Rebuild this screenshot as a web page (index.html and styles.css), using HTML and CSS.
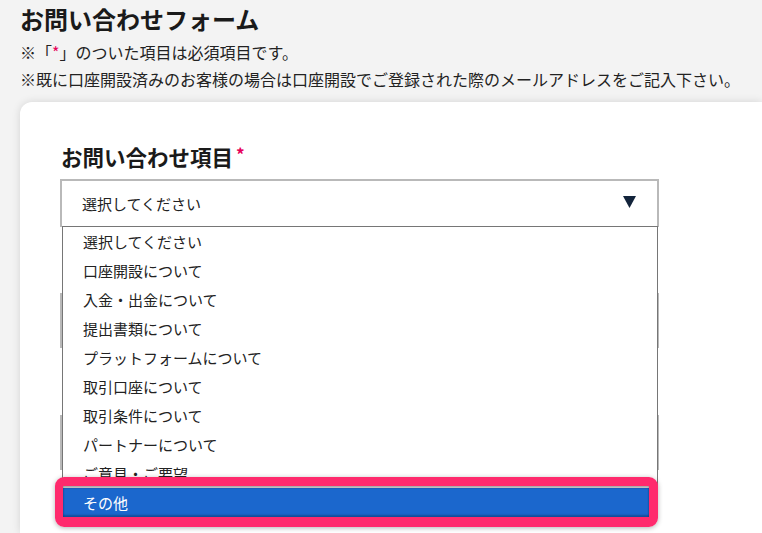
FILE: index.html
```html
<!DOCTYPE html>
<html lang="ja">
<head>
<meta charset="utf-8">
<title>お問い合わせフォーム</title>
<link rel="stylesheet" href="styles.css">
</head>
<body>
<header class="head">
  <h1 class="title">お問い合わせフォーム</h1>
  <p class="note">※「<span class="req">*</span>」のついた項目は必須項目です。</p>
  <p class="note">※既に口座開設済みのお客様の場合は口座開設でご登録された際のメールアドレスをご記入下さい。</p>
</header>
<main class="card">
  <label class="label">お問い合わせ項目<span class="req-lg">*</span></label>
  <div class="select-wrap">
    <div class="select">
      <span class="select-text">選択してください</span>
      <svg class="arrow" width="13" height="12" viewBox="0 0 13 12"><polygon points="0,0 13,0 6.5,12" fill="#13243b"/></svg>
    </div>
    <ul class="options">
      <li class="opt">選択してください</li>
      <li class="opt">口座開設について</li>
      <li class="opt">入金・出金について</li>
      <li class="opt">提出書類について</li>
      <li class="opt">プラットフォームについて</li>
      <li class="opt">取引口座について</li>
      <li class="opt">取引条件について</li>
      <li class="opt">パートナーについて</li>
      <li class="opt">ご意見・ご要望</li>
      <li class="opt opt-active">その他</li>
    </ul>
    <div class="mark"></div>
  </div>
  <div class="field field-1"></div>
  <div class="field field-2"></div>
</main>
</body>
</html>
```

FILE: styles.css
```css
html, body {
  margin: 0;
  padding: 0;
}
body {
  background: #f3f3f3;
  color: #1e1e1e;
  font-family: "Noto Sans CJK JP", "Noto Sans", sans-serif;
  overflow: hidden;
  height: 533px;
}
.head {
  padding: 4px 20px 0 20px;
}
.title {
  margin: 0;
  font-size: 24px;
  line-height: 30px;
  font-weight: 700;
  color: #1a1a1a;
}
.note {
  margin: 0;
  font-size: 16px;
  line-height: 27px;
  color: #222;
}
.head .note:first-of-type {
  margin-top: 4.5px;
}
.req {
  color: #e6005a;
}
.card {
  margin: 9.5px 0 0 20px;
  background: #fff;
  border-radius: 12px 0 0 0;
  box-shadow: 0 0 8px rgba(0, 0, 0, 0.13);
  padding: 40px 0 63px 40px;
}
.label {
  display: block;
  font-size: 21.5px;
  line-height: 30px;
  font-weight: 700;
  color: #1a1a1a;
  margin-bottom: 7px;
  padding-left: 1px;
}
.req-lg {
  color: #e6005a;
  font-size: 17px;
  vertical-align: top;
  line-height: 18px;
  margin-left: 3px;
  position: relative;
  top: 3px;
}
.select-wrap {
  position: relative;
  width: 599px;
}
.select {
  box-sizing: border-box;
  height: 48px;
  border: 2px solid #b9b9b9;
  border-bottom: 0;
  display: flex;
  align-items: center;
  justify-content: space-between;
  padding: 0 21px 2px 20px;
}
.select-text {
  font-size: 15px;
  color: #222;
}
.arrow {
  display: block;
  margin-top: -2px;
}
.options {
  position: absolute;
  top: 47px;
  left: 2px;
  width: 596px;
  box-sizing: border-box;
  margin: 0;
  padding: 0;
  list-style: none;
  background: #fff;
  border: 1px solid #767676;
  z-index: 2;
}
.opt {
  height: 29px;
  line-height: 29px;
  padding-left: 20px;
  font-size: 15px;
  color: #222;
}
.opt-active {
  background: #1b67cd;
  color: #fff;
}
.mark {
  position: absolute;
  z-index: 3;
  left: -5px;
  top: 298px;
  width: 603px;
  height: 50px;
  box-sizing: border-box;
  border-style: solid;
  border-color: #ff2a6d;
  border-width: 9px 9px 10px 8px;
  border-radius: 9px;
  box-shadow: 0 1px 5px rgba(0, 0, 0, 0.3), inset 0 2px 2px rgba(0, 0, 0, 0.35), inset 0 -2px 2px rgba(0, 0, 0, 0.25);
}
.field {
  width: 599px;
  height: 55px;
  box-sizing: border-box;
  border: 2px solid #b9b9b9;
}
.field-1 {
  margin-top: 66px;
}
.field-2 {
  margin-top: 67px;
}
```
